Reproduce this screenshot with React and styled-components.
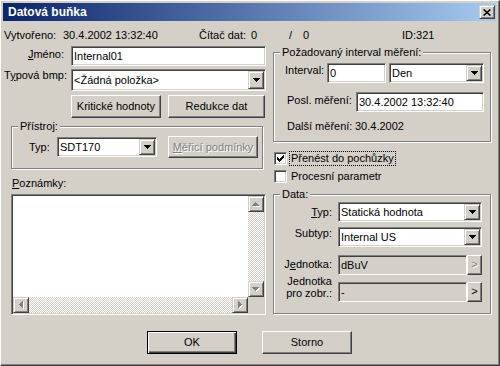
import React from "react";
import styled, { createGlobalStyle, css } from "styled-components";

const FACE = "#d4d0c8";
const SH = "#808080";
const DK = "#404040";
const HI = "#ffffff";

const GlobalStyle = createGlobalStyle`
  html, body { margin: 0; padding: 0; background: ${FACE}; }
  body {
    font-family: "Liberation Sans", Arial, sans-serif;
    font-size: 11px;
    line-height: 13px;
    color: #000;
  }
  *, *::before, *::after { box-sizing: border-box; }
  u { text-decoration: underline; text-underline-offset: 1px; }
`;

const raised = css`
  border: 1px solid;
  border-color: ${HI} ${DK} ${DK} ${HI};
  box-shadow: inset -1px -1px 0 ${SH};
  background: ${FACE};
`;

const raisedSmall = css`
  border: 1px solid;
  border-color: ${FACE} ${DK} ${DK} ${FACE};
  box-shadow: inset 1px 1px 0 ${HI}, inset -1px -1px 0 ${SH};
  background: ${FACE};
`;

const sunken = css`
  border: 1px solid;
  border-color: ${SH} ${HI} ${HI} ${SH};
  box-shadow: inset 1px 1px 0 ${DK}, inset -1px -1px 0 ${FACE};
`;

const Window = styled.div`
  width: 500px;
  height: 366px;
  display: flex;
  flex-direction: column;
  background: ${FACE};
  border: 1px solid;
  border-color: ${HI} ${DK} ${DK} ${HI};
  box-shadow: inset -1px -1px 0 ${SH};
  padding: 2px 3px 3px 2px;
  overflow: hidden;
`;

const TitleBar = styled.div`
  flex: none;
  height: 18px;
  display: flex;
  align-items: center;
  justify-content: space-between;
  padding: 0 1px 0 5px;
  background: linear-gradient(to right, #0a246a, #a6caf0);
`;

const TitleText = styled.span`
  color: #fff;
  font-weight: bold;
  font-size: 12px;
  line-height: 13px;
  white-space: nowrap;
`;

const CloseButton = styled.div`
  ${raisedSmall};
  width: 16px;
  height: 14px;
  display: flex;
  align-items: center;
  justify-content: center;
`;

const Body = styled.div`
  flex: 1;
  display: flex;
  flex-direction: column;
  padding: 8px 1px 0 1px;
`;

const InfoRow = styled.div`
  display: grid;
  grid-template-columns: 59px 136px 52px 38px 14px 99px auto;
  height: 13px;
  white-space: nowrap;
`;

const Main = styled.div`
  display: grid;
  grid-template-columns: 262px 218px;
  column-gap: 7px;
  margin-top: 4px;
  align-items: start;
`;

const Column = styled.div`
  display: flex;
  flex-direction: column;
  align-items: flex-start;
`;

const FormRow = styled.div`
  display: grid;
  grid-template-columns: ${(p) => p.$cols};
  column-gap: ${(p) => (p.$gap != null ? p.$gap : 7)}px;
  align-items: start;
  margin-top: ${(p) => p.$mt || 0}px;
`;

const FlexRow = styled.div`
  display: flex;
  align-items: ${(p) => p.$align || "flex-start"};
  height: ${(p) => (p.$h ? `${p.$h}px` : "auto")};
  margin-top: ${(p) => p.$mt || 0}px;
  margin-left: ${(p) => p.$ml || 0}px;
`;

const Label = styled.span`
  display: block;
  flex: none;
  text-align: ${(p) => (p.$right ? "right" : "left")};
  width: ${(p) => (p.$w ? `${p.$w}px` : "auto")};
  padding-top: ${(p) => p.$pt || 0}px;
  margin-top: ${(p) => p.$mtop || 0}px;
  margin-left: ${(p) => p.$ml || 0}px;
  line-height: ${(p) => p.$lh || 13}px;
  white-space: nowrap;
`;

const Edit = styled.div`
  ${sunken};
  flex: none;
  background: ${(p) => (p.$readonly ? FACE : "#fff")};
  width: ${(p) => (p.$w ? `${p.$w}px` : "100%")};
  height: ${(p) => p.$h || 20}px;
  padding: 0 0 0 2px;
  display: flex;
  align-items: center;
  white-space: nowrap;
  overflow: hidden;
`;

const ComboBox = styled.div`
  ${sunken};
  flex: none;
  background: #fff;
  width: ${(p) => (p.$w ? `${p.$w}px` : "100%")};
  height: ${(p) => p.$h || 20}px;
  margin-left: ${(p) => p.$ml || 0}px;
  padding: 1px;
  display: flex;
`;

const ComboText = styled.span`
  flex: 1;
  display: flex;
  align-items: center;
  padding-left: 1px;
  white-space: nowrap;
  overflow: hidden;
`;

const DropButton = styled.div`
  ${raisedSmall};
  flex: none;
  width: 16px;
  display: flex;
  align-items: center;
  justify-content: center;
`;

const PushButton = styled.div`
  ${raised};
  flex: none;
  width: ${(p) => p.$w}px;
  height: ${(p) => p.$h || 23}px;
  margin-left: ${(p) => p.$ml || 0}px;
  display: flex;
  align-items: center;
  justify-content: center;
  white-space: nowrap;
  ${(p) =>
    p.$default &&
    css`
      border-color: #000;
      box-shadow: inset 1px 1px 0 ${HI}, inset -1px -1px 0 ${DK},
        inset -2px -2px 0 ${SH};
    `}
  ${(p) =>
    p.$disabled &&
    css`
      color: ${SH};
      text-shadow: 1px 1px 0 ${HI};
    `}
`;

const SmallButton = styled.div`
  ${raised};
  flex: none;
  width: 15px;
  height: 20px;
  display: flex;
  align-items: center;
  justify-content: center;
  padding-bottom: 1px;
  color: ${(p) => (p.$disabled ? SH : "#000")};
  text-shadow: ${(p) => (p.$disabled ? `1px 1px 0 ${HI}` : "none")};
`;

const ButtonPair = styled.div`
  display: grid;
  grid-template-columns: 90px 97px;
  column-gap: 7px;
`;

const GroupBox = styled.fieldset`
  margin: ${(p) => p.$mt || 0}px 0 0 ${(p) => p.$ml || 0}px;
  padding: 0;
  min-inline-size: 0;
  width: ${(p) => p.$w}px;
  border: 1px solid ${SH};
  box-shadow: inset 1px 1px 0 ${HI}, 1px 1px 0 ${HI};
`;

const Legend = styled.legend`
  margin-left: 6px;
  padding: 0 2px;
  line-height: 13px;
  background: ${FACE};
  white-space: nowrap;
`;

const GroupBody = styled.div`
  display: flex;
  flex-direction: column;
  padding: ${(p) => p.$pad};
`;

const NotesLabel = styled.span`
  display: block;
  margin: 8px 0 0 8px;
  line-height: 13px;
`;

const NotesBox = styled.div`
  ${sunken};
  background: #fff;
  margin: 4px 0 0 7px;
  width: 255px;
  height: 121px;
  padding: 1px;
  display: grid;
  grid-template-columns: 1fr 16px;
  grid-template-rows: 1fr 16px;
`;

const NotesArea = styled.div`
  background: #fff;
`;

const ScrollBar = styled.div`
  display: flex;
  flex-direction: ${(p) => (p.$vertical ? "column" : "row")};
`;

const ScrollButton = styled.div`
  ${raisedSmall};
  flex: none;
  width: 16px;
  height: 16px;
  display: flex;
  align-items: center;
  justify-content: center;
`;

const Track = styled.div`
  flex: 1;
  background-color: #fff;
  background-image: conic-gradient(
    ${FACE} 25%,
    #fff 0 50%,
    ${FACE} 0 75%,
    #fff 0
  );
  background-size: 2px 2px;
`;

const Corner = styled.div`
  background: ${FACE};
`;

const CheckRow = styled.div`
  display: flex;
  align-items: center;
  height: 15px;
  margin-top: ${(p) => p.$mt || 0}px;
  margin-left: 1px;
`;

const CheckBox = styled.span`
  ${sunken};
  flex: none;
  width: 13px;
  height: 13px;
  background: #fff;
  display: flex;
  align-items: center;
  justify-content: center;
`;

const CheckLabel = styled.span`
  margin-left: 2px;
  padding: 0 1px;
  line-height: 13px;
  border: 1px ${(p) => (p.$focused ? "dotted #000" : "solid transparent")};
  white-space: nowrap;
`;

const ButtonBar = styled.div`
  display: flex;
  justify-content: center;
  gap: 25px;
  margin-top: 16px;
`;

const Pixels = ({ w, h, d, fill = "#000", shadow }) => (
  <svg width={shadow ? w + 1 : w} height={shadow ? h + 1 : h} shapeRendering="crispEdges">
    {shadow && <path d={d} fill={shadow} transform="translate(1 1)" />}
    <path d={d} fill={fill} />
  </svg>
);

const ARROWS = {
  down: { w: 7, h: 4, d: "M0 0h7v1h-7z M1 1h5v1h-5z M2 2h3v1h-3z M3 3h1v1h-1z" },
  up: { w: 7, h: 4, d: "M3 0h1v1h-1z M2 1h3v1h-3z M1 2h5v1h-5z M0 3h7v1h-7z" },
  left: { w: 4, h: 7, d: "M3 0h1v7h-1z M2 1h1v5h-1z M1 2h1v3h-1z M0 3h1v1h-1z" },
  right: { w: 4, h: 7, d: "M0 0h1v7h-1z M1 1h1v5h-1z M2 2h1v3h-1z M3 3h1v1h-1z" },
};

const Arrow = ({ dir, disabled }) => {
  const a = ARROWS[dir];
  return disabled ? (
    <Pixels w={a.w} h={a.h} d={a.d} fill={SH} shadow={HI} />
  ) : (
    <Pixels w={a.w} h={a.h} d={a.d} />
  );
};

const CHECK =
  "M6 0h1v1h-1z M5 1h2v1h-2z M0 2h1v1h-1z M4 2h3v1h-3z M0 3h2v1h-2z M3 3h3v1h-3z M0 4h5v1h-5z M1 5h3v1h-3z M2 6h1v1h-1z";

const Combo = ({ children, w, h, ml }) => (
  <ComboBox $w={w} $h={h} $ml={ml}>
    <ComboText>{children}</ComboText>
    <DropButton>
      <Arrow dir="down" />
    </DropButton>
  </ComboBox>
);

export default function App() {
  return (
    <>
      <GlobalStyle />
      <Window>
        <TitleBar>
          <TitleText>Datová buňka</TitleText>
          <CloseButton>
            <svg width="8" height="7" viewBox="0 0 8 7">
              <path d="M0.6 0.5 L7.4 6.5 M7.4 0.5 L0.6 6.5" stroke="#000" strokeWidth="1.6" />
            </svg>
          </CloseButton>
        </TitleBar>
        <Body>
          <InfoRow>
            <span>Vytvořeno:</span>
            <span>30.4.2002 13:32:40</span>
            <span>Čítač dat:</span>
            <span>0</span>
            <span>/</span>
            <span>0</span>
            <span>ID:321</span>
          </InfoRow>
          <Main>
            <Column>
              <FormRow $cols="60px 195px">
                <Label $right $pt={2}>
                  <u>J</u>méno:
                </Label>
                <Edit>Internal01</Edit>
              </FormRow>
              <FormRow $cols="60px 195px" $mt={3}>
                <Label $right>
                  T<u>y</u>pová bmp:
                </Label>
                <Combo h={22}>&lt;Žádná položka&gt;</Combo>
              </FormRow>
              <FormRow $cols="60px 195px" $mt={4}>
                <span />
                <ButtonPair>
                  <PushButton $w={90}>Kritické hodnoty</PushButton>
                  <PushButton $w={97}>Redukce dat</PushButton>
                </ButtonPair>
              </FormRow>
              <GroupBox $w={252} $ml={7} $mt={2}>
                <Legend>Přístroj:</Legend>
                <GroupBody $pad="3px 0 10px 17px">
                  <FlexRow $align="center" $h={22}>
                    <Label $w={28}>Typ:</Label>
                    <Combo w={100}>SDT170</Combo>
                    <PushButton $w={90} $h={22} $ml={11} $disabled>
                      <span>
                        <u>M</u>ěřicí podmínky
                      </span>
                    </PushButton>
                  </FlexRow>
                </GroupBody>
              </GroupBox>
              <NotesLabel>
                <u>P</u>oznámky:
              </NotesLabel>
              <NotesBox>
                <NotesArea />
                <ScrollBar $vertical>
                  <ScrollButton>
                    <Arrow dir="up" disabled />
                  </ScrollButton>
                  <Track />
                  <ScrollButton>
                    <Arrow dir="down" disabled />
                  </ScrollButton>
                </ScrollBar>
                <ScrollBar>
                  <ScrollButton>
                    <Arrow dir="left" disabled />
                  </ScrollButton>
                  <Track />
                  <ScrollButton>
                    <Arrow dir="right" disabled />
                  </ScrollButton>
                </ScrollBar>
                <Corner />
              </NotesBox>
            </Column>

            <Column>
              <GroupBox $w={218}>
                <Legend>Požadovaný interval měření:</Legend>
                <GroupBody $pad="4px 6px 8px 11px">
                  <FlexRow $h={20}>
                    <Label $w={42} $pt={1}>
                      Interval:
                    </Label>
                    <Edit $w={59}>0</Edit>
                    <Combo w={95} ml={3}>
                      Den
                    </Combo>
                  </FlexRow>
                  <FlexRow $h={20} $mt={9}>
                    <Label $w={69} $ml={2} $pt={2}>
                      Posl. měření:
                    </Label>
                    <Edit $w={128}>30.4.2002 13:32:40</Edit>
                  </FlexRow>
                  <FlexRow $mt={8} $ml={2}>
                    <Label $w={68}>Další měření:</Label>
                    <span>30.4.2002</span>
                  </FlexRow>
                </GroupBody>
              </GroupBox>

              <CheckRow $mt={9}>
                <CheckBox>
                  <Pixels w={7} h={7} d={CHECK} />
                </CheckBox>
                <CheckLabel $focused>Přenést do pochůzky</CheckLabel>
              </CheckRow>
              <CheckRow $mt={3}>
                <CheckBox />
                <CheckLabel>Procesní parametr</CheckLabel>
              </CheckRow>

              <GroupBox $w={218} $mt={4}>
                <Legend>Data:</Legend>
                <GroupBody $pad="1px 0 11px 0">
                  <FormRow $cols="58px 144px" $gap={6}>
                    <Label $right $pt={4}>
                      <u>T</u>yp:
                    </Label>
                    <Combo w={144}>Statická hodnota</Combo>
                  </FormRow>
                  <FormRow $cols="58px 144px" $gap={6} $mt={5}>
                    <Label $right>Subtyp:</Label>
                    <Combo w={144}>Internal US</Combo>
                  </FormRow>
                  <FormRow $cols="58px 144px" $gap={6} $mt={8}>
                    <Label $right $pt={3}>
                      J<u>e</u>dnotka:
                    </Label>
                    <FlexRow>
                      <Edit $w={129} $readonly>
                        dBuV
                      </Edit>
                      <SmallButton $disabled>&gt;</SmallButton>
                    </FlexRow>
                  </FormRow>
                  <FormRow $cols="58px 144px" $gap={6} $mt={7}>
                    <Label $right $lh={12} $mtop={-7}>
                      Jednotka
                      <br />
                      pro zobr.:
                    </Label>
                    <FlexRow>
                      <Edit $w={129} $readonly>
                        -
                      </Edit>
                      <SmallButton>&gt;</SmallButton>
                    </FlexRow>
                  </FormRow>
                </GroupBody>
              </GroupBox>
            </Column>
          </Main>
          <ButtonBar>
            <PushButton $w={90} $default>
              OK
            </PushButton>
            <PushButton $w={90}>Storno</PushButton>
          </ButtonBar>
        </Body>
      </Window>
    </>
  );
}
